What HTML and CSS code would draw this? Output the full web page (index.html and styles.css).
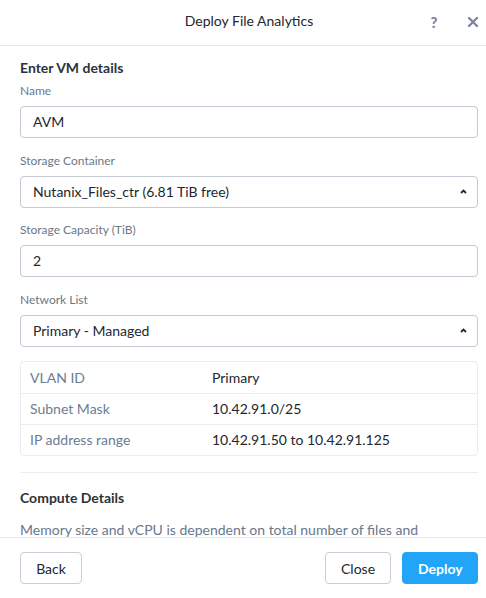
FILE: index.html
```html
<!DOCTYPE html>
<html>
<head>
<meta charset="utf-8">
<link rel="stylesheet" href="styles.css">
</head>
<body>
<div class="modal">
  <div class="header">
    <div class="title">Deploy File Analytics</div>
    <div class="actions">
      <span class="help">?</span>
      <svg class="close-x" width="12" height="12" viewBox="0 0 12 12"><path d="M2 2 L10 10 M10 2 L2 10" stroke="#7d8899" stroke-width="2.4" stroke-linecap="round"/></svg>
    </div>
  </div>
  <div class="body">
    <div class="section-title">Enter VM details</div>
    <div class="field">
      <div class="label">Name</div>
      <div class="input">AVM</div>
    </div>
    <div class="field">
      <div class="label">Storage Container</div>
      <div class="input select">Nutanix_Files_ctr (6.81 TiB free)<svg class="caret" width="7" height="5" viewBox="0 0 7 5"><path d="M1 4 L3.5 1.5 L6 4" fill="none" stroke="#22272e" stroke-width="1.8"/></svg></div>
    </div>
    <div class="field">
      <div class="label">Storage Capacity (TiB)</div>
      <div class="input">2</div>
    </div>
    <div class="field">
      <div class="label">Network List</div>
      <div class="input select">Primary - Managed<svg class="caret" width="7" height="5" viewBox="0 0 7 5"><path d="M1 4 L3.5 1.5 L6 4" fill="none" stroke="#22272e" stroke-width="1.8"/></svg></div>
    </div>
    <div class="table">
      <div class="row"><div class="k">VLAN ID</div><div class="v">Primary</div></div>
      <div class="row"><div class="k">Subnet Mask</div><div class="v">10.42.91.0/25</div></div>
      <div class="row"><div class="k">IP address range</div><div class="v">10.42.91.50 to 10.42.91.125</div></div>
    </div>
    <div class="divider"></div>
    <div class="section-title compute">Compute Details</div>
    <p class="desc">Memory size and vCPU is dependent on total number of files and folders in the file server.</p>
  </div>
  <div class="footer">
    <button class="btn">Back</button>
    <div class="right">
      <button class="btn close">Close</button>
      <button class="btn primary">Deploy</button>
    </div>
  </div>
</div>
</body>
</html>
```
FILE: styles.css
```css
* { box-sizing: border-box; }
html, body { margin: 0; padding: 0; background: #fff; }
body { font-family: Lato, "Open Sans", sans-serif; color: #22272e; }
.modal { width: 486px; height: 598px; display: flex; flex-direction: column; overflow: hidden; }
.header { height: 46px; flex: none; border-bottom: 1px solid #e6e9ee; position: relative; display: flex; align-items: center; justify-content: center; }
.title { font-size: 14px; color: #22272e; margin-left: 12px; margin-top: -5px; }
.actions { position: absolute; right: 7px; top: 13px; display: flex; align-items: center; gap: 27px; }
.help { font-size: 15px; font-weight: 900; color: #7d8899; width: 12px; text-align: center; }
.close-x { display: block; }
.body { flex: 1; overflow: hidden; padding: 0 8px 0 20px; }
.section-title { font-size: 14px; font-weight: 700; line-height: 20px; margin-top: 12px; color: #2c323b; }
.field { margin-top: 5px; }
.field + .field { margin-top: 14.5px; }
.label { font-size: 12px; line-height: 16px; color: #6b7889; }
.input { margin-top: 7px; height: 32px; border: 1px solid #c4c9d4; border-radius: 4px; padding: 0 12px; font-size: 14px; line-height: 30px; color: #22272e; position: relative; }
.caret { position: absolute; right: 10px; top: 12px; display: block; }
.table { margin-top: 14px; border: 1px solid #eaecf0; border-radius: 4px; }
.row { display: flex; height: 31px; align-items: center; font-size: 14px; }
.row + .row { border-top: 1px solid #eaecf0; }
.k { width: 191px; padding-left: 9px; color: #6b7d92; }
.v { color: #22272e; }
.divider { height: 1px; background: #eaecf0; margin-top: 16px; }
.section-title.compute { margin-top: 15px; }
.desc { margin: 12px 0 0; width: 430px; font-size: 14px; line-height: 20px; color: #6b7889; }
.footer { height: 61px; flex: none; border-top: 1px solid #e6e9ee; display: flex; align-items: center; justify-content: space-between; padding: 0 8px 0 20px; }
.right { display: flex; gap: 11px; }
.btn { font-family: Lato, "Open Sans", sans-serif; font-size: 14px; height: 32px; border: 1px solid #c9ced8; border-radius: 4px; background: #fff; color: #22272e; padding: 0 15px; min-width: 62px; }
.btn.close { width: 66px; }
.btn.primary { background: #22a5f7; border-color: #22a5f7; color: #fff; font-weight: 700; width: 76px; }
```
